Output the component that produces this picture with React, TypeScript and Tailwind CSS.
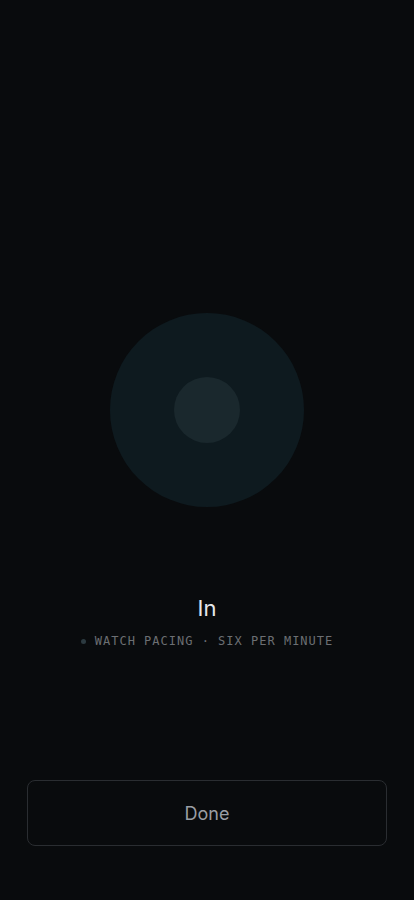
export default function App() {
  return (
    <div className="min-h-screen bg-[#090b0d] flex justify-center">
      <div className="w-[414px] h-[900px] flex flex-col items-center px-[27px]">
        <div className="mt-[313px] w-[194px] h-[194px] rounded-full bg-[#0e1a1f] flex items-center justify-center">
          <div className="w-[66px] h-[66px] rounded-full bg-[#1a282d]" />
        </div>

        <div className="mt-[87px] text-[22px] leading-[28px] text-[#e5e7eb] font-['Inter',sans-serif]">
          In
        </div>

        <div className="mt-[11px] flex items-center gap-[9px] text-[12px] leading-[16px] tracking-[1px] text-[#6c6f73] font-['DejaVu_Sans_Mono',monospace]">
          <span className="w-[5px] h-[5px] rounded-full bg-[#2c3a40]" />
          <span>WATCH PACING · SIX PER MINUTE</span>
        </div>

        <button className="mt-auto mb-[54px] w-full h-[66px] rounded-[8px] border border-[#2a2d31] bg-[#090b0d] text-[18px] text-[#9a9ea4] font-['Inter',sans-serif]">
          Done
        </button>
      </div>
    </div>
  );
}
